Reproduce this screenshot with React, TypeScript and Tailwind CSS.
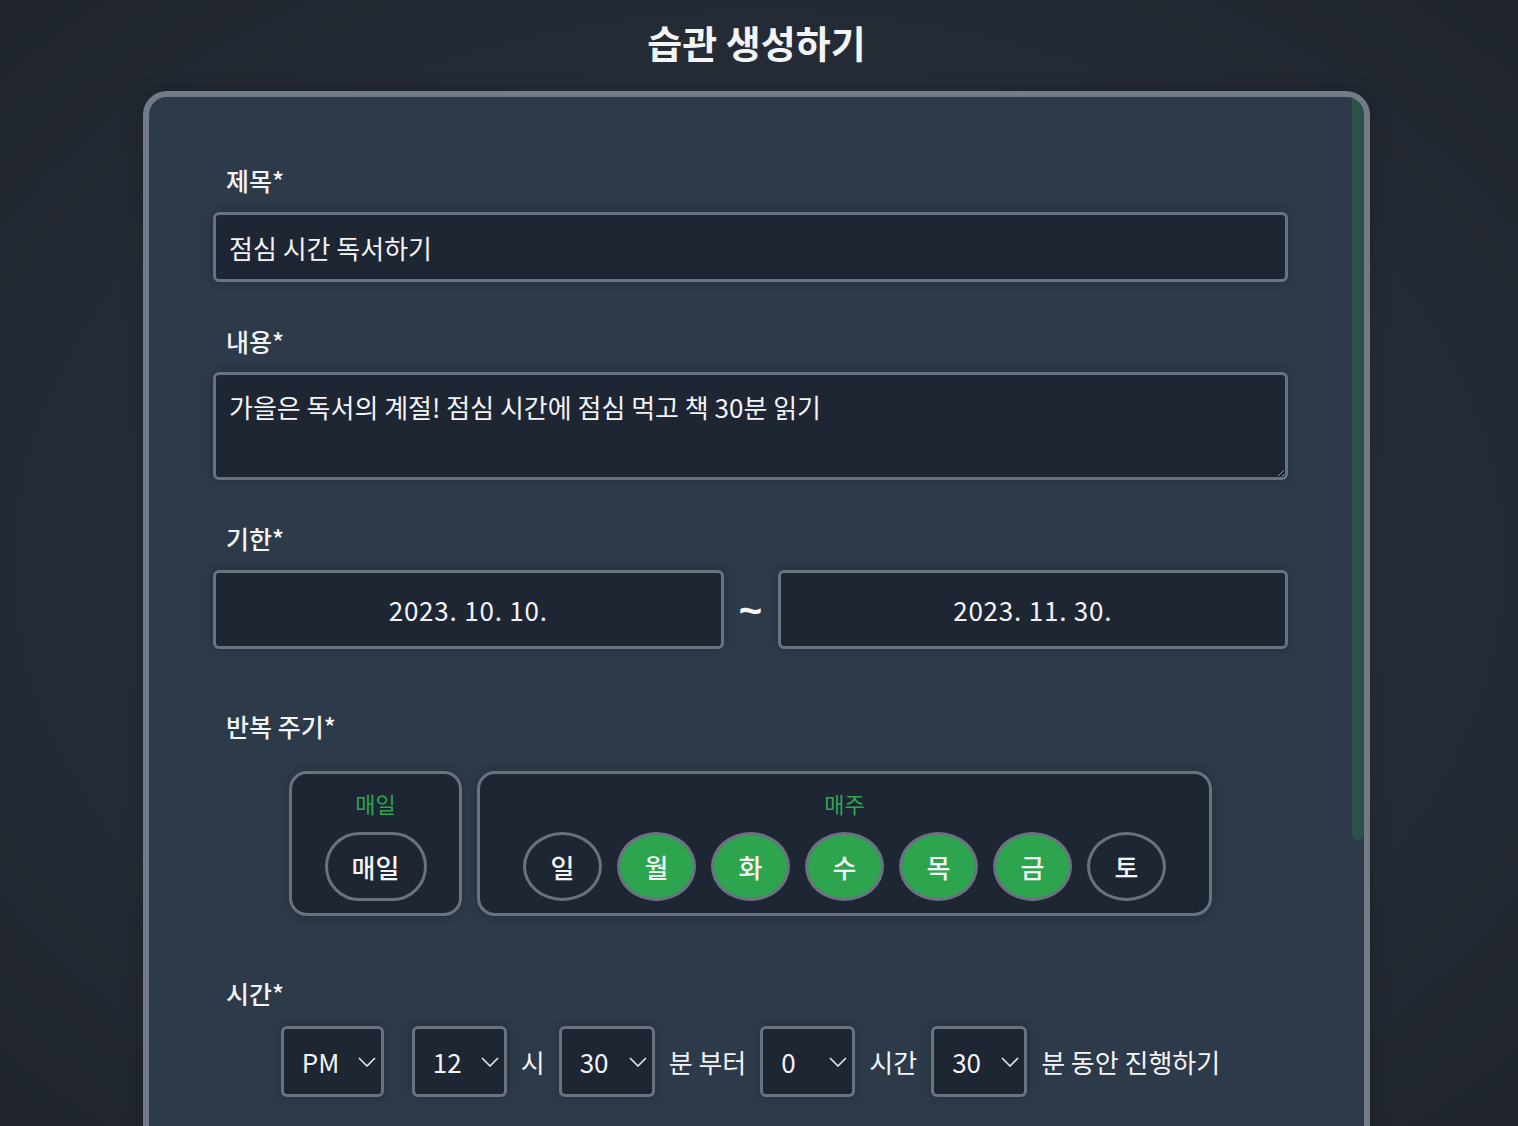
const days = [
  { label: "일", on: false },
  { label: "월", on: true },
  { label: "화", on: true },
  { label: "수", on: true },
  { label: "목", on: true },
  { label: "금", on: true },
  { label: "토", on: false },
];

const font = { fontFamily: '"Noto Sans CJK KR", "Noto Sans", sans-serif' };

const Label = ({ text, className = "" }: { text: string; className?: string }) => (
  <label className={`ml-[13px] text-[25px] leading-[36px] font-medium text-gray-100 ${className}`}>
    {text}
  </label>
);

const Select = ({
  value,
  options,
  width,
}: {
  value: string;
  options: string[];
  width: string;
}) => (
  <div className={`relative h-[71px] ${width}`}>
    <select
      defaultValue={value}
      className="h-full w-full appearance-none rounded-md border-[3px] border-gray-500 bg-[#1e2533] pl-[18px] text-[26px] text-gray-100 shadow-[0_0_10px_rgba(0,0,0,0.2)] outline-none"
    >
      {options.map((o) => (
        <option key={o}>{o}</option>
      ))}
    </select>
    <svg
      width="18"
      height="10"
      viewBox="0 0 18 10"
      className="pointer-events-none absolute top-1/2 right-[8px] -translate-y-1/2 text-gray-200"
    >
      <polyline points="1,1 9,9 17,1" fill="none" stroke="currentColor" strokeWidth="1.6" />
    </svg>
  </div>
);

const App = () => {
  return (
    <div
      className="h-screen overflow-hidden bg-[radial-gradient(ellipse_at_center,#2c343f_0%,#272e38_50%,#20252d_100%)] text-gray-100"
      style={font}
    >
      <h1 className="pt-[15px] pr-[5px] text-center text-[38px] leading-[54px] font-bold">습관 생성하기</h1>

      <div className="mt-[22px] ml-[143px] flex h-[1100px] w-[1227px] overflow-hidden rounded-3xl border-[6px] border-[#737b87] bg-[#2d3a49] shadow-[0_0_20px_rgba(0,0,0,0.2)]">
        <form className="flex min-w-0 flex-1 flex-col px-16 pt-[65px]">
          <div className="flex flex-col">
            <Label text="제목*" className="mb-[14px]" />
            <input
              defaultValue="점심 시간 독서하기"
              className="h-[70px] rounded-md border-[3px] border-gray-500 bg-[#1e2533] px-[13px] text-[26px] text-gray-100 shadow-[0_0_10px_rgba(0,0,0,0.2)] outline-none"
            />
          </div>

          <div className="mt-[41px] flex flex-col">
            <Label text="내용*" className="mb-[13px]" />
            <textarea
              defaultValue="가을은 독서의 계절! 점심 시간에 점심 먹고 책 30분 읽기"
              className="h-[108px] resize-y rounded-md border-[3px] border-gray-500 bg-[#1e2533] px-[13px] pt-[14px] text-[26px] leading-[36px] text-gray-100 shadow-[0_0_10px_rgba(0,0,0,0.2)] outline-none"
            />
          </div>

          <div className="mt-[40px] flex flex-col">
            <Label text="기한*" className="mb-[14px]" />
            <div className="flex items-center">
              <button
                type="button"
                className="h-[79px] flex-1 rounded-md border-[3px] border-gray-500 bg-[#1e2533] text-[26px] tracking-[0.8px] text-gray-100 shadow-[0_0_10px_rgba(0,0,0,0.2)]"
              >
                2023. 10. 10.
              </button>
              <span
                className="w-[54px] text-center text-[40px] font-bold"
                style={{ fontFamily: '"Liberation Sans", sans-serif' }}
              >
                ~
              </span>
              <button
                type="button"
                className="h-[79px] flex-1 rounded-md border-[3px] border-gray-500 bg-[#1e2533] text-[26px] tracking-[0.8px] text-gray-100 shadow-[0_0_10px_rgba(0,0,0,0.2)]"
              >
                2023. 11. 30.
              </button>
            </div>
          </div>

          <div className="mt-[59px] flex flex-col">
            <Label text="반복 주기*" className="mb-[27px]" />
            <div className="flex justify-center gap-[15px]">
              <div className="flex h-[145px] w-[173px] flex-col items-center gap-[14px] rounded-[18px] border-[3px] border-gray-500 bg-[#1e2533] pt-[14px] shadow-[0_0_10px_rgba(0,0,0,0.2)]">
                <span className="text-[22px] leading-[30px] text-[#2ea44f]">매일</span>
                <button
                  type="button"
                  className="h-[69px] w-[102px] rounded-full border-[3px] border-gray-500 bg-[#1e2533] text-[26px] font-medium text-gray-100"
                >
                  매일
                </button>
              </div>
              <div className="flex h-[145px] w-[735px] flex-col items-center gap-[14px] rounded-[18px] border-[3px] border-gray-500 bg-[#1e2533] pt-[14px] shadow-[0_0_10px_rgba(0,0,0,0.2)]">
                <span className="text-[22px] leading-[30px] text-[#2ea44f]">매주</span>
                <div className="flex gap-[15px]">
                  {days.map((d) => (
                    <button
                      key={d.label}
                      type="button"
                      className={`h-[69px] w-[79px] rounded-[50%] border-[3px] border-gray-500 text-[26px] font-medium text-gray-100 ${
                        d.on ? "bg-[#2da44e]" : "bg-[#1e2533]"
                      }`}
                    >
                      {d.label}
                    </button>
                  ))}
                </div>
              </div>
            </div>
          </div>

          <div className="mt-[59px] flex flex-col">
            <Label text="시간*" className="mb-[15px]" />
            <div className="flex items-center justify-center gap-[14px] text-[26px]">
              <Select value="PM" options={["AM", "PM"]} width="w-[103px]" />
              <div className="ml-[14px]">
                <Select value="12" options={["1", "2", "3", "4", "5", "6", "7", "8", "9", "10", "11", "12"]} width="w-[95px]" />
              </div>
              <span>시</span>
              <Select value="30" options={["0", "10", "20", "30", "40", "50"]} width="w-[96px]" />
              <span>분 부터</span>
              <Select value="0" options={["0", "1", "2", "3", "4", "5"]} width="w-[95px]" />
              <span>시간</span>
              <Select value="30" options={["0", "10", "20", "30", "40", "50"]} width="w-[96px]" />
              <span>분 동안 진행하기</span>
            </div>
          </div>
        </form>

        {/* scrollbar */}
        <div className="w-3 shrink-0">
          <div className="h-[743px] rounded-b-full bg-[#2c5248]" />
        </div>
      </div>
    </div>
  );
};

export default App;
